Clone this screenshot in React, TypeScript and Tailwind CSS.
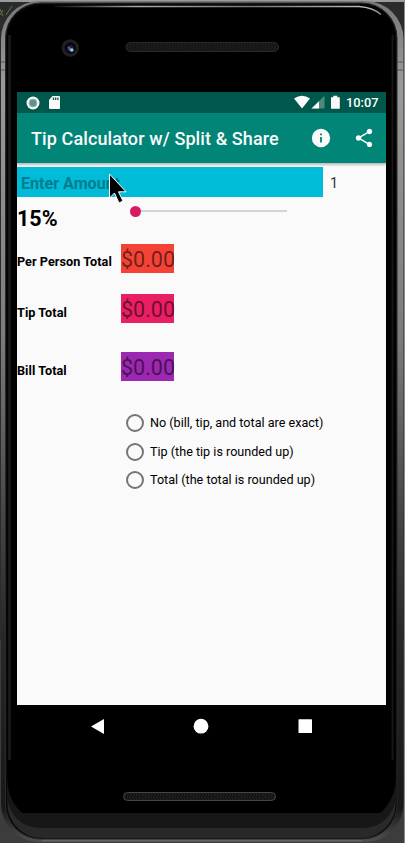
import type { ReactNode } from "react";

const totals = [
  { label: "Per Person Total", row: "h-[28px] mt-[10px]", text: "pt-[10px]", color: "bg-[#f44336]" },
  { label: "Tip Total", row: "h-[28px] mt-[22.5px]", text: "pt-[11px]", color: "bg-[#e91e63]" },
  { label: "Bill Total", row: "h-[28px] mt-[29.5px]", text: "pt-[11px]", color: "bg-[#9c27b0]" },
];

const options = [
  "No (bill, tip, and total are exact)",
  "Tip (the tip is rounded up)",
  "Total (the total is rounded up)",
];

function DeviceFrame() {
  return (
    <svg className="absolute inset-0" width="405" height="843" viewBox="0 0 405 843" fill="none">
      <defs>
        <linearGradient id="metal" x1="0" y1="0" x2="0" y2="1">
          <stop offset="0" stopColor="#77797a" />
          <stop offset="0.1" stopColor="#9a9a9a" />
          <stop offset="0.4" stopColor="#7c7c7c" />
          <stop offset="0.6" stopColor="#484848" />
          <stop offset="0.75" stopColor="#292929" />
          <stop offset="0.96" stopColor="#181818" />
          <stop offset="1" stopColor="#505050" />
        </linearGradient>
        <linearGradient id="shine" x1="55" y1="0" x2="382" y2="0" gradientUnits="userSpaceOnUse">
          <stop offset="0" stopColor="#111" />
          <stop offset="0.25" stopColor="#aaa" />
          <stop offset="0.6" stopColor="#777" />
          <stop offset="0.95" stopColor="#bbb" />
          <stop offset="1" stopColor="#888" />
        </linearGradient>
        <pattern id="grille" width="3" height="4" patternUnits="userSpaceOnUse">
          <rect width="3" height="4" fill="#101010" />
          <path d="M0 1h2M1 3h2" stroke="#292929" />
        </pattern>
      </defs>
      <path d="M0 0h405v2H0z" fill="#9a9c9c" />
      <path d="M0 640h405v203H0z" fill="#3b3c3d" />
      <path d="M0 9l3 7M3 10l-3 5M12 6L6 15" stroke="#60754d" />
      <path d="M404.5 0v843" stroke="#8b8b8b" />
      <rect x="1" y="1" width="402.5" height="841" rx="38" fill="url(#metal)" />
      <rect x="5.5" y="3" width="391.5" height="836" rx="35" fill="#080808" stroke="#292929" />
      <path d="M7.5 780H395.5V804a34 34 0 0 1-34 34H41.5a34 34 0 0 1-34-34z" fill="#292929" />
      <path d="M7.5 780H395.5V796a32 32 0 0 1-32 32H39.5a32 32 0 0 1-32-32z" fill="#171717" />
      <path d="M7.5 39a34 34 0 0 1 34-34h320a34 34 0 0 1 34 34V785q-3 17-15 28H22q-12-11-14.500-28z" fill="#000" />
      <path d="M9.5 35v725" stroke="#181818" strokeWidth="3" />
      <path d="M392.5 35v725" stroke="#171717" strokeWidth="2" />
      <path d="M1 62h4M397 62h6M1 70h4M397 70h6" stroke="#555" />
      <path d="M55 6.500h304q14 1 22 8" stroke="url(#shine)" strokeWidth="1.3" />
      <path d="M42 840.5h320" stroke="#656565" strokeWidth="1.4" />
      <rect x="126" y="42.5" width="152.5" height="9" rx="4.5" fill="url(#grille)" stroke="#292929" />
      <rect x="123.5" y="792.5" width="152" height="8" rx="4" fill="url(#grille)" stroke="#454541" />
      <circle cx="70.3" cy="48" r="7.2" fill="#080808" stroke="#202020" strokeWidth="3" />
      <circle cx="70.2" cy="48.5" r="3.3" fill="#1b214d" />
      <path d="M68.5 47l2 3" stroke="#4f69aa" strokeWidth="2" />
      <circle cx="71.8" cy="50" r="1.8" fill="#a5bdef" />
    </svg>
  );
}

function StatusBar() {
  return (
    <div className="flex h-[21px] shrink-0 items-center bg-[#00574b] text-white">
      <svg className="ml-[9px]" width="14" height="14" viewBox="0 0 14 14">
        <circle cx="7" cy="7" r="6.5" fill="#fafafa" />
        <circle cx="7" cy="7" r="4" fill="#5b9489" stroke="#9dbeb8" strokeWidth="1" />
      </svg>
      <svg className="ml-[9px]" width="11" height="13" viewBox="0 0 11 13">
        <path d="M3.5 0H10q1 0 1 1v11q0 1-1 1H1q-1 0-1-1V4z" fill="#fafafa" />
        <path d="M4.5 1.5v2.4M6.7 1.5v2.4M8.9 1.5v2.4" stroke="#00574b" strokeWidth="1.3" />
      </svg>
      <div className="flex-1" />
      <svg width="48" height="15" viewBox="0 0 48 15">
        <path d="M0 3.5Q8-2 16 3.5L8 13.5z" fill="#fafafa" />
        <path d="M17.5 13.5L30.5.8v12.7z" fill="#4d897f" />
        <path d="M17.5 13.5L25 6.3v7.2z" fill="#fafafa" />
        <path d="M37 2.2h2.3V.8h4v1.4h2.5v11.5H37z" fill="#fafafa" />
      </svg>
      <span className="w-[44px] pl-[4px] text-[12.8px] leading-[21px] font-medium whitespace-nowrap">10:07</span>
    </div>
  );
}

function AppBar() {
  return (
    <div className="relative z-10 flex h-[50px] shrink-0 items-center bg-[#008577] pl-[14px] text-[#fafafa] shadow-[0_2px_2px_rgba(0,0,0,0.24)]">
      <h1 className="w-[275px] pt-[2px] text-[18px] leading-[24px] font-medium tracking-[0.1px] whitespace-nowrap">Tip Calculator w/ Split &amp; Share</h1>
      <svg className="ml-[3.5px] shrink-0" width="22" height="22" viewBox="0 0 24 24" fill="currentColor">
        <path d="M12 2a10 10 0 100 20 10 10 0 000-20zm1 15h-2v-6h2v6zm0-8h-2V7h2v2z" />
      </svg>
      <svg className="ml-[21px] shrink-0" width="22" height="22" viewBox="0 0 24 24" fill="currentColor">
        <path d="M18 16.08c-.76 0-1.44.3-1.96.77L8.91 12.7c.05-.23.09-.46.09-.7s-.04-.47-.09-.7l7.05-4.11c.54.5 1.25.81 2.04.81 1.66 0 3-1.34 3-3s-1.34-3-3-3-3 1.34-3 3c0 .24.04.47.09.7L8.04 9.81C7.5 9.31 6.79 9 6 9c-1.66 0-3 1.34-3 3s1.34 3 3 3c.79 0 1.5-.31 2.04-.81l7.12 4.16c-.05.21-.08.43-.08.65 0 1.61 1.31 2.92 2.92 2.92s2.92-1.31 2.92-2.92-1.31-2.92-2.92-2.92z" />
      </svg>
    </div>
  );
}

function Option({ children }: { children: ReactNode }) {
  return (
    <label className="flex h-[28.7px] items-center gap-[6px]">
      <span className="size-[18px] shrink-0 rounded-full border-2 border-[#757575]" />
      <span className="text-[12.6px] leading-[16px] whitespace-nowrap text-black">{children}</span>
    </label>
  );
}

export default function App() {
  return (
    <div className="relative h-[843px] w-[405px] overflow-hidden bg-[#2b2b2b] pt-[92px] pl-[17px] font-[Roboto,sans-serif]">
      <DeviceFrame />
      <main className="relative flex h-[613px] w-[369px] flex-col bg-[#fafafa]">
        <StatusBar />
        <AppBar />
        <div className="mt-[4px] flex h-[30px] shrink-0 items-center">
          <div className="h-[30px] w-[306px] bg-[#00bcd8] pl-[4px] text-[16.1px] leading-[33px] font-bold text-[#007c8e]">Enter Amount</div>
          <span className="ml-[7px] pt-[4px] text-[14.4px] text-[#333]">1</span>
        </div>
        <div className="flex h-[44px] shrink-0">
          <strong className="w-[113px] pt-[9px] text-[21.5px] leading-[26px] font-bold text-black">15%</strong>
          <div className="flex h-[28px] w-[157px] items-center">
            <span className="size-[11px] rounded-full bg-[#d81b60]" />
            <span className="h-[2px] flex-1 bg-[#d4d4d4]" />
          </div>
        </div>
        <div className="-mt-[7.5px] flex shrink-0 flex-col">
          {totals.map(({ label, row, text, color }) => (
            <div key={label} className={"flex shrink-0 " + row}>
              <strong className={"w-[104px] text-[12.65px] leading-[16px] font-bold tracking-[0.05px] whitespace-nowrap text-black " + text}>{label}</strong>
              <span className={"h-[29px] w-[53px] text-[21.5px] leading-[31px] text-black/55 " + color}>$0.00</span>
            </div>
          ))}
        </div>
        <div className="mt-[29px] ml-[109px] flex flex-col">
          {options.map((text) => (
            <Option key={text}>{text}</Option>
          ))}
        </div>
      </main>
      <nav className="relative h-[43px] w-[369px]">
        <svg width="369" height="43" viewBox="0 0 369 43" fill="#fff">
          <path d="M74 21.5L87 14v15z" />
          <circle cx="184" cy="21.2" r="7.4" />
          <rect x="281.5" y="14.2" width="13.5" height="13.7" rx=".5" />
        </svg>
      </nav>
      <svg className="absolute top-[173px] left-[108px]" width="20" height="32" viewBox="0 0 20 32">
        <path d="M1.5 1v24l5-5 4.5 10 4-2-4.5-9.2H18z" fill="#000" stroke="#fff" strokeWidth="1" />
      </svg>
    </div>
  );
}
